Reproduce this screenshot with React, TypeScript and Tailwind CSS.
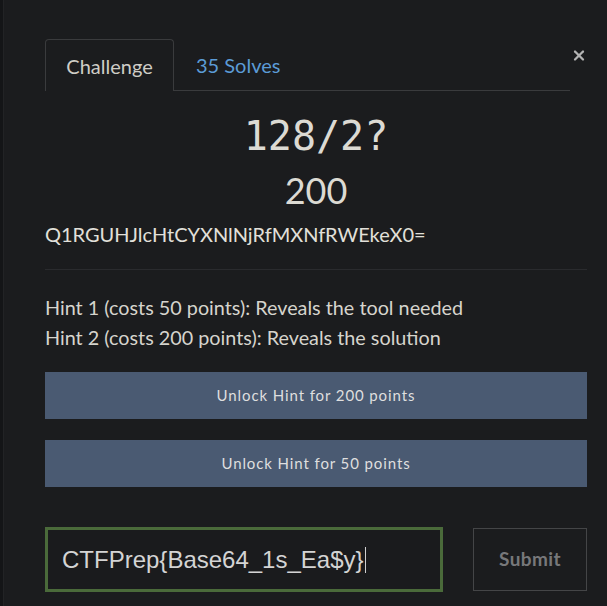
import { X } from 'lucide-react';

const hints = [
  { id: 1, cost: 50, text: 'Reveals the tool needed' },
  { id: 2, cost: 200, text: 'Reveals the solution' },
];

export default function App() {
  return (
    <div className="flex w-[607px] h-[606px] overflow-hidden bg-[#1b1c1e] font-['Lato',sans-serif]">
      {/* left edge of page behind modal */}
      <div className="w-[4px] shrink-0 bg-[#141517] border-r border-[#222325]" />

      <div className="flex-1 pl-[41px] pr-[20px] pt-[39px]">
        {/* Tabs */}
        <div className="flex items-start">
          <div className="flex-1 flex border-b border-[#3a3b3d] h-[52px]">
            <div className="w-[129px] h-[52px] -mb-px border border-b-0 border-[#3a3b3d] rounded-t-[4px] bg-[#1b1c1e] flex items-center justify-center text-[20px] text-[#cfcdc6]">
              Challenge
            </div>
            <div className="px-[22px] flex items-center text-[20px] text-[#5b9bd6]">35 Solves</div>
          </div>
          <button className="ml-[1px] mt-[8px] w-[16px] h-[16px] flex items-center justify-center text-[#b3b3b3]">
            <X size={21} strokeWidth={3.4} />
          </button>
        </div>

        {/* Title */}
        <div className="text-center">
          <h1 className="mt-[22px] text-[40px] leading-[46px] text-[#dcdad3] font-['DejaVu_Sans_Mono',monospace]">128/2?</h1>
          <h2 className="mt-[10px] text-[36px] leading-[42px] text-[#dcdad3]">200</h2>
        </div>

        <p className="mt-[11px] text-[20px] leading-[24px] text-[#e2e0da]">Q1RGUHJlcHtCYXNlNjRfMXNfRWEkeX0=</p>

        <hr className="mt-[23px] border-0 border-t border-[#2a2b2e]" />

        {/* Hints */}
        <div className="mt-[22px] text-[19.8px] leading-[30px] text-[#d6d4cd]">
          {hints.map((h) => (
            <p key={h.id}>
              Hint {h.id} (costs {h.cost} points): {h.text}
            </p>
          ))}
        </div>

        <div className="mt-[20px] flex flex-col gap-[21px]">
          <button className="h-[47px] w-full bg-[#4a5a72] text-[15px] tracking-[0.06em] text-[#dfdfdf]">
            Unlock Hint for 200 points
          </button>
          <button className="h-[47px] w-full bg-[#4a5a72] text-[15px] tracking-[0.06em] text-[#dfdfdf]">
            Unlock Hint for 50 points
          </button>
        </div>

        {/* Flag submission */}
        <div className="mt-[40px] flex items-center gap-[30px]">
          <div className="w-[398px] h-[65px] border-[3px] border-[#4a6a3a] bg-[#1a1b1d] flex items-center pl-[14px]">
            <span className="text-[24px] text-[#d4d4d4] font-['Liberation_Sans',sans-serif]">CTFPrep{'{'}Base64_1s_Ea$y{'}'}</span>
            <span className="w-px h-[26px] bg-[#d0d0d0] ml-px" />
          </div>
          <button className="w-[114px] h-[63px] border border-[#444547] text-[19px] font-bold tracking-[0.02em] text-[#77787a]">
            Submit
          </button>
        </div>
      </div>
    </div>
  );
}
